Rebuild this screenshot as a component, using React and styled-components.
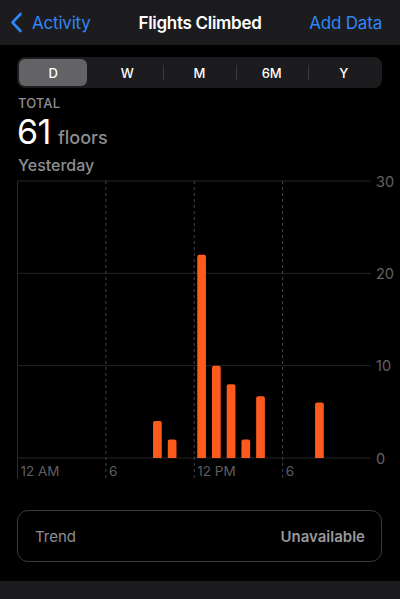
import styled, { createGlobalStyle } from "styled-components";
import { useState } from "react";

const GlobalStyle = createGlobalStyle`
    html, body {
        margin: 0;
        padding: 0;
        background: #000;
    }
    body {
        font-family: Inter, "Noto Sans", sans-serif;
        -webkit-font-smoothing: antialiased;
    }
`;

const segments = ["D", "W", "M", "6M", "Y"];

// hour -> floors climbed
const bars = [
    { hour: 9, value: 4 },
    { hour: 10, value: 2 },
    { hour: 12, value: 22 },
    { hour: 13, value: 10 },
    { hour: 14, value: 8 },
    { hour: 15, value: 2 },
    { hour: 16, value: 6.7 },
    { hour: 20, value: 6 },
];

const CHART = {
    left: 0.5,
    right: 354,
    top: 2,
    bottom: 279,
    max: 30,
};

const Chart = () => {
    const { left, right, top, bottom, max } = CHART;
    const hourW = (right - left) / 24;
    const y = (v) => bottom - ((bottom - top) * v) / max;

    return (
        <ChartSvg width="383" height="302" viewBox="0 0 383 302">
            {[30, 20, 10, 0].map((v) => (
                <g key={v}>
                    <line x1={left} x2={right} y1={y(v)} y2={y(v)} stroke="#242426" strokeWidth="1" />
                    <text x={359} y={y(v) + 5.5} fill="#636366" fontSize="14.5" fontFamily="Inter, sans-serif">
                        {v}
                    </text>
                </g>
            ))}
            <line x1={left} x2={left} y1={top} y2={300} stroke="#2a2a2c" strokeWidth="1" />
            {[6, 12, 18].map((h) => (
                <line
                    key={h}
                    x1={left + hourW * h}
                    x2={left + hourW * h}
                    y1={top}
                    y2={300}
                    stroke="#444446"
                    strokeWidth="1"
                    strokeDasharray="3 3"
                />
            ))}
            {[
                { h: 0, t: "12 AM" },
                { h: 6, t: "6" },
                { h: 12, t: "12 PM" },
                { h: 18, t: "6" },
            ].map((l) => (
                <text
                    key={l.h}
                    x={left + hourW * l.h + 3}
                    y={296.5}
                    fill="#5e5e62"
                    fontSize="13.5"
                    fontFamily="Inter, sans-serif"
                >
                    {l.t}
                </text>
            ))}
            {bars.map((b) => {
                const x = left + hourW * b.hour + 3;
                const t = y(b.value);
                return (
                    <path
                        key={b.hour}
                        d={`M${x} ${bottom} V${t + 2} Q${x} ${t} ${x + 2} ${t} H${x + 6.7} Q${x + 8.7} ${t} ${x + 8.7} ${t + 2} V${bottom} Z`}
                        fill="#ff5a1e"
                    />
                );
            })}
        </ChartSvg>
    );
};

const App = () => {
    const [active, setActive] = useState("D");

    return (
        <Screen>
            <GlobalStyle />
            <NavBar>
                <BackButton>
                    <svg width="13" height="21" viewBox="0 0 13 21">
                        <path d="M10.5 2 L2.5 10.5 L10.5 19" fill="none" stroke="#2f86f6" strokeWidth="2.6" strokeLinecap="round" strokeLinejoin="round" />
                    </svg>
                    <span>Activity</span>
                </BackButton>
                <NavTitle>Flights Climbed</NavTitle>
                <NavAction>Add Data</NavAction>
            </NavBar>

            <Content>
                <Segmented>
                    {segments.map((s, i) => (
                        <Segment
                            key={s}
                            $active={active === s}
                            $divider={i > 1}
                            onClick={() => setActive(s)}
                        >
                            {s}
                        </Segment>
                    ))}
                </Segmented>

                <TotalLabel>TOTAL</TotalLabel>
                <TotalValue>
                    61<Unit>floors</Unit>
                </TotalValue>
                <DateLabel>Yesterday</DateLabel>

                <ChartWrap>
                    <Chart />
                </ChartWrap>

                <TrendCard>
                    <span>Trend</span>
                    <TrendValue>Unavailable</TrendValue>
                </TrendCard>
            </Content>

            <TabBar />
        </Screen>
    );
};

const Screen = styled.div`
    width: 400px;
    height: 599px;
    background: #000;
    display: flex;
    flex-direction: column;
    overflow: hidden;
`;

const NavBar = styled.div`
    height: 45px;
    flex-shrink: 0;
    background: #1c1c1e;
    display: flex;
    align-items: center;
    justify-content: space-between;
    padding: 0 18px 0 10px;
    position: relative;
`;

const BackButton = styled.div`
    display: flex;
    align-items: center;
    gap: 9px;
    color: #2f86f6;
    font-size: 17px;
    letter-spacing: -0.2px;

    svg {
        margin-top: -1px;
    }
`;

const NavTitle = styled.div`
    position: absolute;
    left: 0;
    right: 0;
    text-align: center;
    color: #fff;
    font-size: 17px;
    font-weight: 600;
    letter-spacing: -0.3px;
    pointer-events: none;
`;

const NavAction = styled.div`
    color: #2f86f6;
    font-size: 17px;
    letter-spacing: -0.2px;
`;

const Content = styled.div`
    flex: 1;
    padding: 12px 18px 0 17px;
    display: flex;
    flex-direction: column;
`;

const Segmented = styled.div`
    height: 31px;
    box-sizing: border-box;
    background: #1c1c1e;
    border-radius: 8px;
    padding: 2px;
    display: grid;
    grid-template-columns: repeat(5, 1fr);
    align-items: center;
`;

const Segment = styled.div`
    height: 27px;
    display: flex;
    align-items: center;
    justify-content: center;
    border-radius: 6px;
    font-size: 13px;
    font-weight: 500;
    color: #fff;
    background: ${(p) => (p.$active ? "#636366" : "transparent")};
    margin-right: ${(p) => (p.$active ? "4px" : "0")};
    position: relative;

    &::before {
        content: "";
        display: ${(p) => (p.$divider ? "block" : "none")};
        position: absolute;
        left: 0;
        top: 6px;
        bottom: 6px;
        width: 1px;
        background: #3a3a3c;
    }
`;

const TotalLabel = styled.div`
    margin-top: 7px;
    margin-left: 1px;
    color: #8e8e93;
    font-size: 13px;
    font-weight: 500;
    letter-spacing: 0.1px;
    line-height: 16px;
`;

const TotalValue = styled.div`
    color: #fff;
    font-size: 34px;
    line-height: 38px;
    font-weight: 400;
    letter-spacing: -0.5px;
    margin-top: 2px;
`;

const Unit = styled.span`
    color: #8e8e93;
    font-size: 18px;
    font-weight: 500;
    margin-left: 7px;
    letter-spacing: 0;
`;

const DateLabel = styled.div`
    color: #8e8e93;
    font-size: 16px;
    font-weight: 500;
    line-height: 20px;
    margin-top: -2px;
    margin-left: 1px;
`;

const ChartWrap = styled.div`
    margin-top: 4px;
    height: 302px;
`;

const ChartSvg = styled.svg`
    display: block;
    overflow: visible;
`;

const TrendCard = styled.div`
    margin-top: 29px;
    height: 52px;
    box-sizing: border-box;
    border: 1px solid #3a3a3c;
    border-radius: 11px;
    display: flex;
    align-items: center;
    justify-content: space-between;
    padding: 0 16px 0 17px;
    color: #8e8e93;
    font-size: 15px;
`;

const TrendValue = styled.span`
    font-weight: 600;
    color: #98989d;
`;

const TabBar = styled.div`
    height: 18px;
    flex-shrink: 0;
    background: #1c1c1e;
`;

export default App;
